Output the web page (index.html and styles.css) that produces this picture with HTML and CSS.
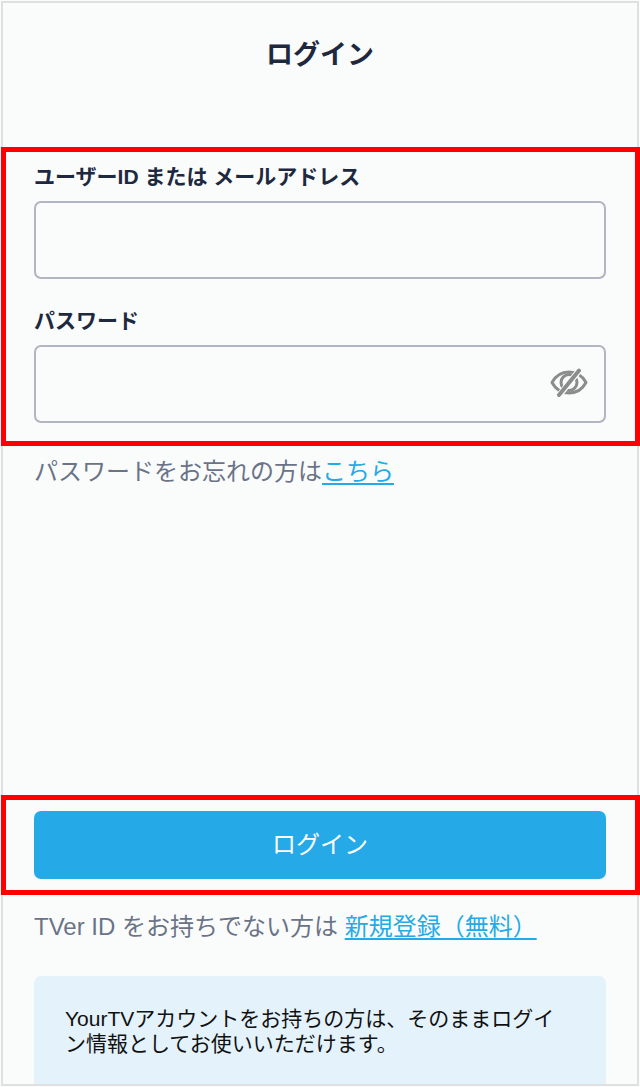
FILE: index.html
```html
<!DOCTYPE html>
<html lang="ja">
<head>
  <meta charset="UTF-8">
  <meta name="viewport" content="width=device-width, initial-scale=1">
  <title>ログイン</title>
  <link rel="stylesheet" href="styles.css">
</head>
<body>

<main class="screen">
  <header class="header">
    <h1>ログイン</h1>
  </header>

  <form class="login-form">
    <div class="highlight fields">
      <div class="field">
        <label for="user">ユーザーID または メールアドレス</label>
        <div class="input-box">
          <input type="text" id="user" autocomplete="username">
        </div>
      </div>
      <div class="field">
        <label for="password">パスワード</label>
        <div class="input-box">
          <input type="password" id="password" autocomplete="current-password">
          <button type="button" class="toggle" aria-label="パスワードを表示">
            <svg width="40" height="32" viewBox="0 0 40 32" fill="none" stroke="#8c8c8c" stroke-width="3">
              <path d="M3 14.500C10.500 0.500 29.500 0.500 37 14.500C29.500 28.500 10.500 28.500 3 14.500Z" stroke-linejoin="round"/>
              <circle cx="20" cy="14.500" r="8"/>
              <path d="M10 27.500L30.500 2" stroke="#fafcfc" stroke-width="6"/>
              <path d="M10 27L30 2.500" stroke-width="4" stroke-linecap="round"/>
            </svg>
          </button>
        </div>
      </div>
    </div>

    <p class="guide forgot">パスワードをお忘れの方は<a href="#">こちら</a></p>

    <div class="highlight submit">
      <button type="submit" class="login-button">ログイン</button>
    </div>
  </form>

  <p class="guide register">TVer ID をお持ちでない方は <a href="#">新規登録（無料）</a></p>

  <p class="note">YourTVアカウントをお持ちの方は、そのままログイン情報としてお使いいただけます。</p>
</main>

</body>
</html>
```
FILE: styles.css
```css
* {
  box-sizing: border-box;
}

body {
  margin: 0;
  padding: 1px;
  min-height: 100vh;
  display: flex;
  font-family: "Liberation Sans", "Noto Sans CJK JP", sans-serif;
  background: #fafcfc;
  color: #1e293f;
}

.screen {
  flex: 1;
  min-width: 0;
  display: flex;
  flex-direction: column;
  border: 2px solid #e0e0e0;
}

.header {
  padding: 32px 31px 72px;
  text-align: center;
}

h1 {
  margin: 0;
  font-size: 27px;
  line-height: 40px;
}

.login-form {
  flex: 1;
  display: flex;
  flex-direction: column;
}

/* 赤枠は画面の枠線に重ねる */
.highlight {
  margin: 0 -3px 0 -2px;
  border: 5px solid #ff0000;
  padding: 10px 29px 18px 28px;
}

.fields {
  display: flex;
  flex-direction: column;
  gap: 27px;
}

.field {
  display: flex;
  flex-direction: column;
  gap: 9px;
}

label {
  font-size: 21px;
  line-height: 30px;
  font-weight: bold;
}

.input-box {
  display: flex;
  align-items: center;
  height: 78px;
  border: 2px solid #b0b4c3;
  border-radius: 7px;
}

.input-box input {
  flex: 1;
  min-width: 0;
  height: 100%;
  padding: 0 16px;
  border: none;
  outline: none;
  background: transparent;
  font: inherit;
  font-size: 24px;
}

.toggle {
  display: flex;
  margin-right: 15px;
  padding: 0;
  border: none;
  background: none;
  cursor: pointer;
}

.guide {
  margin: 0;
  padding: 0 31px;
  font-size: 24px;
  line-height: 36px;
  color: #6b7387;
}

.guide a {
  color: #25aae7;
  text-decoration-thickness: 2px;
  text-underline-offset: 3px;
}

.forgot {
  margin-top: 8px;
}

.submit {
  margin-top: auto;
  padding-top: 11px;
  padding-bottom: 11px;
}

.login-button {
  display: block;
  width: 100%;
  height: 68px;
  padding: 0 0 6px;
  border: none;
  border-radius: 7px;
  background: #25aae7;
  color: #fff;
  font: inherit;
  font-size: 24px;
  cursor: pointer;
}

.register {
  margin-top: 14px;
}

.note {
  margin: 31px 31px 0;
  padding: 30px 31px 28px;
  border-radius: 7px 7px 0 0;
  background: #e4f2fb;
  color: #111;
  font-size: 21px;
  line-height: 25px;
}
```
